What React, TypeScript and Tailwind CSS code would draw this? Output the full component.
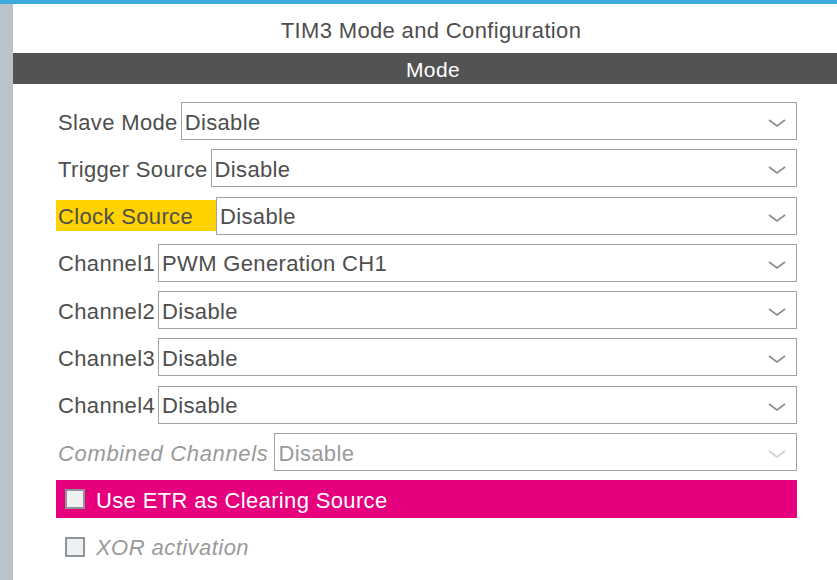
import React from 'react';

type Row = { label: string; value: string; highlight?: boolean; disabled?: boolean };

const rows: Row[] = [
  { label: 'Slave Mode', value: 'Disable' },
  { label: 'Trigger Source', value: 'Disable' },
  { label: 'Clock Source', value: 'Disable', highlight: true },
  { label: 'Channel1', value: 'PWM Generation CH1' },
  { label: 'Channel2', value: 'Disable' },
  { label: 'Channel3', value: 'Disable' },
  { label: 'Channel4', value: 'Disable' },
  { label: 'Combined Channels', value: 'Disable', disabled: true },
];

const Chevron = ({ disabled }: { disabled?: boolean }) => (
  <svg width="18" height="10" viewBox="0 0 18 10" className="absolute right-[10px] top-1/2 -translate-y-[3px]">
    <path d="M1 2 L9 8 L17 2" fill="none" stroke={disabled ? '#cfcfcf' : '#8c8c8c'} strokeWidth="1.6" />
  </svg>
);

const Checkbox = () => (
  <span className="inline-block w-[20px] h-[20px] shrink-0 bg-[#eef0f2] border-2 border-[#8e9498]" />
);

const App = () => {
  return (
    <div
      className="w-[837px] h-[580px] overflow-hidden flex flex-col bg-white tracking-[0.35px]"
      style={{ fontFamily: '"Liberation Sans", Arial, sans-serif' }}
    >
      <div className="h-[4px] bg-[#3eaade]" />
      <div className="flex flex-1">
        <div className="w-[13px] bg-[#b9c4ca]" />
        <div className="flex-1 flex flex-col">
          <div className="h-[49px] flex items-center justify-center text-[22px] text-[#4e4e4e] pt-[3px] pl-[12px]">
            TIM3 Mode and Configuration
          </div>
          <div className="h-[31px] bg-[#525453] flex items-center justify-center text-white text-[21px] pt-[2px] pl-[16px]">
            Mode
          </div>
          <div className="pl-[43px] pr-[40px] pt-[18px] flex flex-col gap-[9.3px]">
            {rows.map((r) => (
              <div key={r.label} className="flex items-center h-[38px]">
                {r.highlight ? (
                  <div className="w-[160px] h-[31px] bg-[#ffd200] flex items-center pl-[2px] pt-[2px] text-[22px] text-[#4e4e4e]">
                    {r.label}
                  </div>
                ) : (
                  <div
                    className={
                      r.disabled
                        ? 'pl-[2px] pr-[6px] pt-[2px] text-[22px] italic tracking-[0.65px] text-[#9a9a9a]'
                        : 'pl-[2px] pr-[3px] pt-[2px] text-[22px] text-[#4e4e4e]'
                    }
                  >
                    {r.label}
                  </div>
                )}
                <div className="relative flex-1 h-[38px] border border-[#9ea3a6] flex items-center pl-[3px] pt-[2px] text-[22px]">
                  <span className={r.disabled ? 'text-[#9a9a9a]' : 'text-[#4e4e4e]'}>{r.value}</span>
                  <Chevron disabled={r.disabled} />
                </div>
              </div>
            ))}
            <div className="h-[38px] bg-[#e6007e] flex items-center pl-[9px] gap-[11px] text-white text-[22px]">
              <Checkbox />
              <span className="pt-[2px]">Use ETR as Clearing Source</span>
            </div>
            <div className="h-[38px] flex items-center pl-[9px] gap-[11px] text-[#9a9a9a] text-[22px] italic tracking-[0.45px]">
              <Checkbox />
              <span className="pt-[2px]">XOR activation</span>
            </div>
          </div>
        </div>
      </div>
    </div>
  );
};

export default App;
